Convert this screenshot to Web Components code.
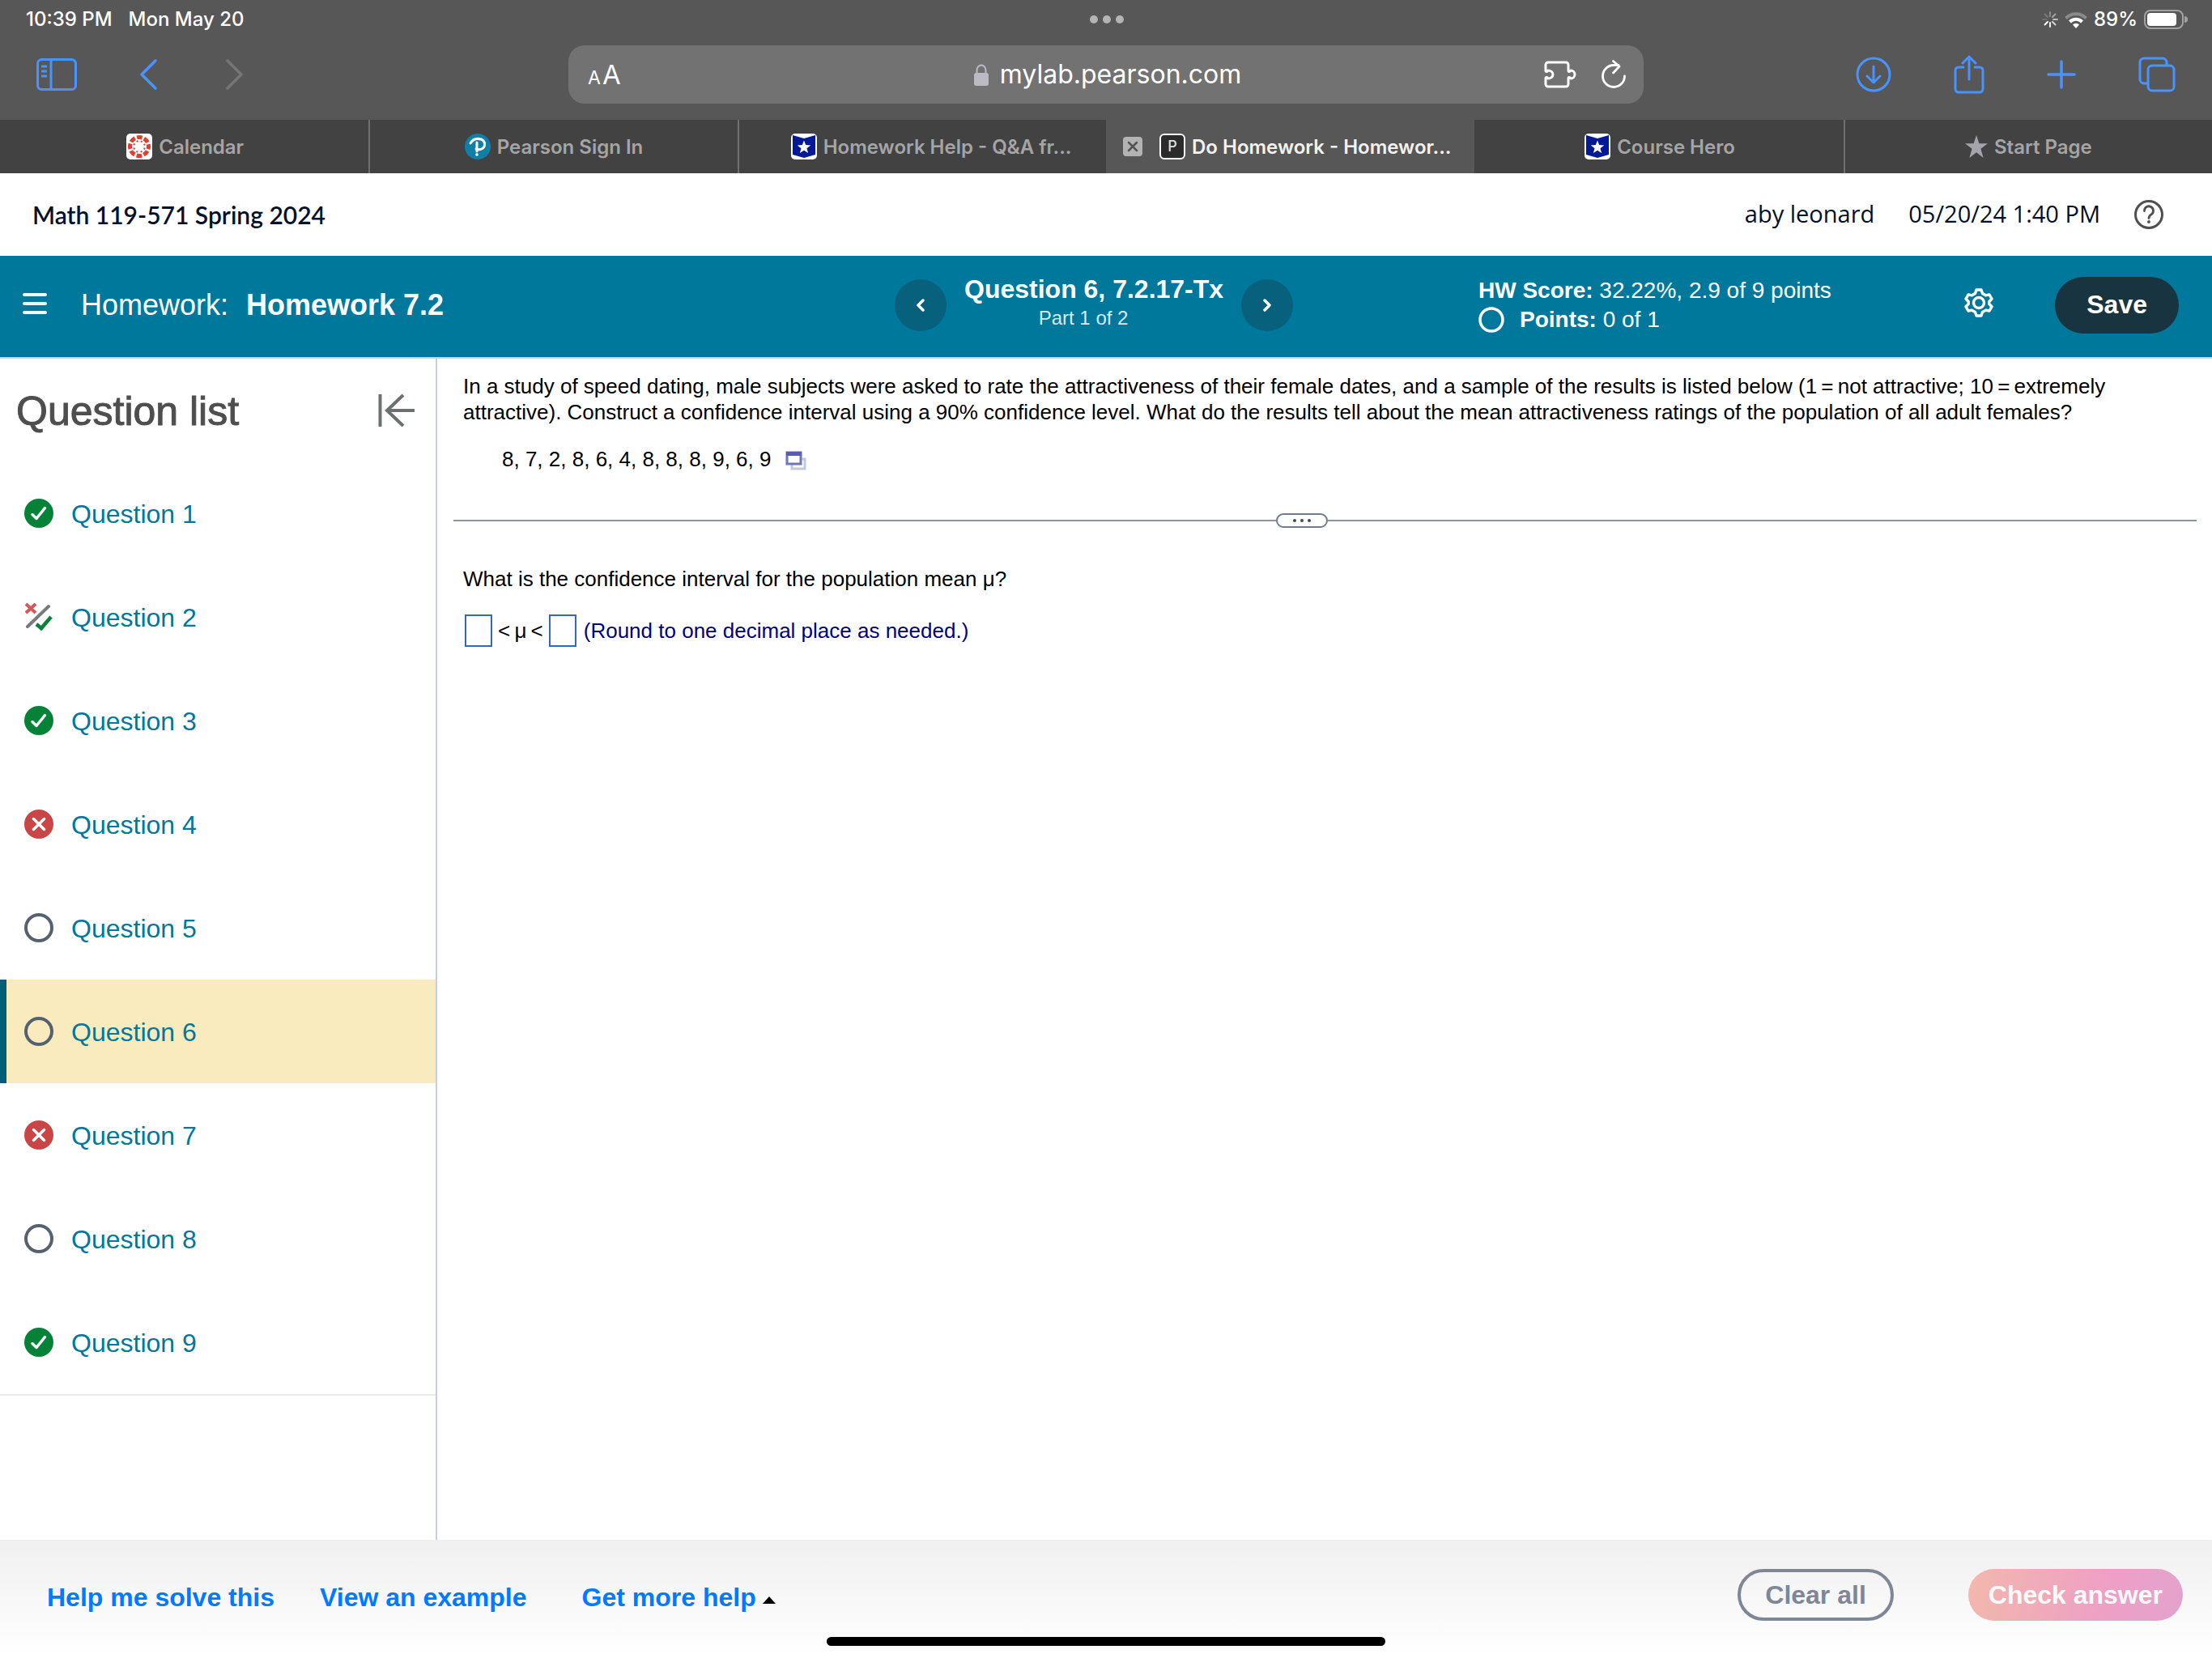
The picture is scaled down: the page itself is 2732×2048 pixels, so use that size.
<!DOCTYPE html>
<html lang="en">
<head>
<meta charset="utf-8">
<title>Do Homework - Homework 7.2</title>
<style>
html, body { margin: 0; padding: 0; }
body { background: #fff; color: #000; font-family: "Liberation Sans", Arial, sans-serif; }
</style>
</head>
<body>
<homework-app></homework-app>
<script>
const define = (name, html, setup) => {
  const template = document.createElement('template');
  template.innerHTML = html;
  customElements.define(name, class extends HTMLElement {
    constructor() {
      super();
      this.attachShadow({ mode: 'open' }).append(template.content.cloneNode(true));
    }
    connectedCallback() { if (setup) setup(this, this.shadowRoot); }
  });
};

const ICONS = {
  sidebar: ['50 40', '<g fill="none" stroke="currentColor" stroke-width="3"><rect x="1.5" y="1.5" width="47" height="37" rx="5"/><path d="M18 2v36M6 10h7M6 16h7M6 22h7"/></g>'],
  back: ['22 38', '<path d="M20 2L3 19l17 17" fill="none" stroke="currentColor" stroke-width="3.500" stroke-linecap="round" stroke-linejoin="round"/>'],
  forward: ['22 38', '<path d="M2 2l17 17L2 36" fill="none" stroke="currentColor" stroke-width="3.500" stroke-linecap="round" stroke-linejoin="round"/>'],
  lock: ['18 27', '<rect y="11" width="18" height="16" rx="3" fill="currentColor"/><path d="M3.500 12V8a5.500 6.500 0 0 1 11 0v4" fill="none" stroke="currentColor" stroke-width="2"/>'],
  puzzle: ['42 34', '<path d="M2 12V5a3 3 0 0 1 3-3h22a3 3 0 0 1 3 3v7c0 2 2 2 3 0a5 5 0 1 1 0 10c-1-2-3-2-3 0v7a3 3 0 0 1-3 3H5a3 3 0 0 1-3-3v-7c0-2 2-2 3 0a6 5 0 1 0 0-10c-1 2-3 2-3 0z" fill="none" stroke="currentColor" stroke-width="3" stroke-linejoin="round"/>'],
  reload: ['30 36', '<path d="M28.500 20A13.500 13.500 0 1 1 15 6.500h6M14.500 1.500L22 8l-7.500 8" fill="none" stroke="currentColor" stroke-width="2.800" stroke-linecap="round" stroke-linejoin="round"/>'],
  download: ['44 44', '<g fill="none" stroke="currentColor" stroke-width="3" stroke-linecap="round" stroke-linejoin="round"><circle cx="22" cy="22" r="20"/><path d="M22 12v19M14 24l8 8 8-8"/></g>'],
  share: ['38 48', '<g fill="none" stroke="currentColor" stroke-width="3" stroke-linecap="round" stroke-linejoin="round"><path d="M12 15H6a4 4 0 0 0-4 4v23a4 4 0 0 0 4 4h26a4 4 0 0 0 4-4V19a4 4 0 0 0-4-4h-6M19 30V2M11 10l8-8 8 8"/></g>'],
  plus: ['36 36', '<path d="M18 2v32M2 18h32" stroke="currentColor" stroke-width="3.500" stroke-linecap="round"/>'],
  windows: ['46 44', '<g fill="none" stroke="currentColor" stroke-width="3"><rect x="12" y="11" width="32" height="31" rx="5"/><path d="M12 33H7a5 5 0 0 1-5-5V7a5 5 0 0 1 5-5h23a5 5 0 0 1 5 5v4"/></g>'],
  spinner: ['20 20', '<g stroke="#fff" stroke-width="2" stroke-linecap="round"><path d="M10 1v5" opacity=".3"/><path d="M16.500 3.500L13 7" opacity=".45"/><path d="M19 10h-5" opacity=".6"/><path d="M16.500 16.500L13 13" opacity=".75"/><path d="M10 19v-5" opacity=".9"/><path d="M3.500 16.500L7 13"/><path d="M1 10h5" opacity=".15"/><path d="M3.500 3.500L7 7" opacity=".2"/></g>'],
  wifi: ['28 21', '<g fill="none" stroke="#fff" stroke-width="4"><path d="M1.500 8.500a17.500 17.500 0 0 1 25 0" stroke="#8a8a8a"/><path d="M6.500 13a10.500 10.500 0 0 1 15 0"/></g><path d="M14 21l-4-4.500a5.600 5.600 0 0 1 8 0z" fill="#fff"/>'],
  battery: ['54 24', '<rect x="1" y="1" width="47" height="22" rx="7" fill="none" stroke="#a2a2a2" stroke-width="2"/><rect x="4" y="4" width="36" height="16" rx="4" fill="#fff"/><path d="M50 8a4 4 0 0 1 0 8z" fill="#a2a2a2"/>'],
  dots: ['42 10', '<g fill="#b4b4b4"><circle cx="5" cy="5" r="5"/><circle cx="21" cy="5" r="5"/><circle cx="37" cy="5" r="5"/></g>'],
  canvas: ['32 32', '<rect width="32" height="32" rx="5" fill="#fff"/><circle cx="16" cy="16" r="11.500" fill="none" stroke="#e63b2e" stroke-width="5" stroke-dasharray="6.600 2.432" stroke-dashoffset="3.300"/><circle cx="16" cy="16" r="6.800" fill="none" stroke="#e63b2e" stroke-width="2" stroke-dasharray="2 3.340" stroke-dashoffset="-1.670"/>'],
  pearson: ['32 32', '<circle cx="16" cy="16" r="16" fill="#0f7fa5"/><path d="M7 12c3-5 8-6.500 13-5 6 2 6.500 11-1 12.500-2 .4-4 0-5-.5M15 11v11" fill="none" stroke="#fff" stroke-width="3" stroke-linecap="round"/><circle cx="15" cy="26" r="1.800" fill="#fff"/>'],
  coursehero: ['32 32', '<rect width="32" height="32" rx="5" fill="#fff"/><path d="M2 2l14 4 14-4v24l-14 4-14-4z" fill="#001a96"/><path d="M16 8.500l2.200 5.600 6 .3-4.700 3.800 1.600 5.800-5.100-3.300-5.100 3.300 1.600-5.800-4.700-3.800 6-.3z" fill="#fff"/>'],
  star: ['28 28', '<path d="M14 0l3.400 10.300H28l-8.600 6.500L22.600 28 14 21.200 5.400 28l3.200-11.200L0 10.300h10.600z" fill="#a5a4ad"/>'],
  close: ['24 24', '<rect width="24" height="24" rx="4" fill="#b3b3b3"/><path d="M7 7l10 10M17 7L7 17" stroke="#555" stroke-width="2.500" stroke-linecap="round"/>'],
  help: ['36 36', '<circle cx="18" cy="18" r="16.500" fill="none" stroke="#4f4f4f" stroke-width="3"/><path d="M12.500 13.500a5.500 5.500 0 1 1 8.500 4.400c-2 1.300-3 2.100-3 4.600" fill="none" stroke="#4f4f4f" stroke-width="2.800" stroke-linecap="round"/><circle cx="18" cy="27" r="1.900" fill="#4f4f4f"/>'],
  menu: ['30 28', '<path d="M2 3h26M2 14h26M2 25h26" stroke="#f2fafc" stroke-width="4" stroke-linecap="round"/>'],
  prev: ['10 16', '<path d="M8 2L2 8l6 6" fill="none" stroke="#fff" stroke-width="3.500" stroke-linecap="round" stroke-linejoin="round"/>'],
  next: ['10 16', '<path d="M2 2l6 6-6 6" fill="none" stroke="#fff" stroke-width="3.500" stroke-linecap="round" stroke-linejoin="round"/>'],
  ring: ['32 32', '<circle cx="16" cy="16" r="14" fill="none" stroke="#fff" stroke-width="3.500"/>'],
  gear: ['36 36', '<path d="M15 2h6l1.500 4.500 4 2.300L31 8l3 5.200-3.200 3.300v3L34 22.800 31 28l-4.500-.8-4 2.300L21 34h-6l-1.500-4.500-4-2.300L5 28l-3-5.200 3.200-3.300v-3L2 13.200 5 8l4.500.8 4-2.300z" fill="none" stroke="#fff" stroke-width="3.400" stroke-linejoin="round"/><circle cx="18" cy="18" r="6.500" fill="none" stroke="#fff" stroke-width="3.400"/>'],
  collapse: ['46 42', '<path d="M2.500 1v40M45 21H10M31 2L11 21l20 19" fill="none" stroke="#6b7070" stroke-width="4"/>'],
  correct: ['36 36', '<circle cx="18" cy="18" r="18" fill="#038238"/><path d="M10 19.500l5 5 10.500-13" fill="none" stroke="#fff" stroke-width="3.500" stroke-linecap="round" stroke-linejoin="round"/>'],
  wrong: ['36 36', '<circle cx="18" cy="18" r="18" fill="#ca4646"/><path d="M11.500 11.500l13 13M24.500 11.500l-13 13" stroke="#fff" stroke-width="3.500" stroke-linecap="round"/>'],
  empty: ['36 36', '<circle cx="18" cy="18" r="16" fill="none" stroke="#566170" stroke-width="4"/>'],
  partial: ['36 36', '<path d="M4 30L30 5" stroke="#777b7e" stroke-width="4" stroke-linecap="round"/><path d="M2 2l12 11M14 2L2 13" stroke="#d05a5a" stroke-width="4"/><path d="M15 27l6 5 12-14" fill="none" stroke="#038238" stroke-width="4.500"/>'],
  popup: ['26 24', '<rect x="8" y="10" width="16" height="12" fill="#fff" stroke="#c3c8e4" stroke-width="3"/><rect x="2" y="2" width="17" height="14" fill="#fff" stroke="#6d78bb" stroke-width="3"/><path d="M1 3.500h19" stroke="#5560ab" stroke-width="5"/>'],
  caret: ['16 9', '<path d="M0 9l8-9 8 9z" fill="#000"/>']
};

customElements.define('ui-icon', class extends HTMLElement {
  constructor() { super(); this.attachShadow({ mode: 'open' }); }
  connectedCallback() {
    const [size, shapes] = ICONS[this.getAttribute('name')];
    const [w, h] = size.split(' ');
    this.shadowRoot.innerHTML = `<style>:host{display:block;flex:none}svg{display:block}</style>
      <svg width="${w}" height="${h}" viewBox="0 0 ${w} ${h}" aria-hidden="true">${shapes}</svg>`;
  }
});

const RESET = `button{font:inherit;color:inherit;background:none;border:0;padding:0;margin:0;display:flex;align-items:center}
  a{color:inherit;text-decoration:none}`;

define('status-bar', `<style>
  :host{display:grid;grid-template-columns:1fr auto 1fr;align-items:center;height:48px;padding:0 30px 0 32px;color:#fff;font:500 24px/28px Inter,sans-serif}
  .time{display:flex;gap:20px}
  .state{display:flex;justify-content:flex-end;align-items:center;gap:8px}
  </style>
  <div class="time"><span>10:39 PM</span><span>Mon May 20</span></div>
  <ui-icon name="dots"></ui-icon>
  <div class="state"><ui-icon name="spinner"></ui-icon><ui-icon name="wifi"></ui-icon><span>89%</span><ui-icon name="battery"></ui-icon></div>`);

define('safari-toolbar', `<style>${RESET}
  :host{display:grid;grid-template-columns:702fr 1328fr 702fr;align-items:center;height:72px;padding:8px 0 20px;color:#4893ff;font-family:Inter,sans-serif}
  .left{display:flex;align-items:center;gap:77px;padding-left:45px}
  .off{color:#757575;margin-left:8px}
  .address{display:grid;grid-template-columns:1fr auto 1fr;align-items:center;height:72px;box-sizing:border-box;padding:0 22px 0 24px;background:#727272;border-radius:20px;color:#fff}
  .size{align-items:baseline;gap:2px;padding-top:4px;font-size:33px;line-height:40px}
  .size small{font-size:23px}
  .url{display:flex;align-items:center;gap:14px;padding-left:2px;font-size:32px;line-height:40px}
  .url ui-icon{color:#bcbbc4}
  .tools{display:flex;justify-content:flex-end;align-items:center;gap:29px}
  .right{display:flex;justify-content:flex-end;align-items:center;gap:77px;padding-right:45px}
  </style>
  <div class="left"><button aria-label="Sidebar"><ui-icon name="sidebar"></ui-icon></button><button aria-label="Back"><ui-icon name="back"></ui-icon></button><button class="off" aria-label="Forward"><ui-icon name="forward"></ui-icon></button></div>
  <div class="address"><button class="size"><small>A</small><span>A</span></button><div class="url"><ui-icon name="lock"></ui-icon><span>mylab.pearson.com</span></div>
  <div class="tools"><button aria-label="Extensions"><ui-icon name="puzzle"></ui-icon></button><button aria-label="Reload"><ui-icon name="reload"></ui-icon></button></div></div>
  <div class="right"><button aria-label="Downloads"><ui-icon name="download"></ui-icon></button><button aria-label="Share"><ui-icon name="share"></ui-icon></button><button aria-label="New tab"><ui-icon name="plus"></ui-icon></button><button aria-label="Tabs"><ui-icon name="windows"></ui-icon></button></div>`);

define('browser-tab', `<style>${RESET}
  :host{display:flex;align-items:center;justify-content:center;gap:8px;background:#424242;color:#a5a5a5;box-sizing:border-box;border-left:2px solid #6f6f6f;white-space:nowrap;overflow:hidden;font:600 24px/32px Inter,sans-serif}
  :host([plain]){border-left-color:#424242}
  :host([long]){justify-content:flex-start;padding-left:64px}
  :host([active]){justify-content:flex-start;padding-left:19px;background:#575757;color:#f2f2f2;border-left-color:#575757}
  .close{display:none;margin-right:13px}
  :host([active]) .close{display:block}
  .label{padding-top:2px}
  .p{display:none;width:32px;height:32px;box-sizing:border-box;border:2px solid #fff;border-radius:6px;background:#2b2b2b;color:#ddd;font-size:18px;line-height:28px;text-align:center;font-weight:500}
  :host([active]) .p{display:block}
  </style>
  <button class="close" aria-label="Close tab"><ui-icon name="close"></ui-icon></button><span class="p">P</span><slot name="icon"></slot><span class="label"><slot></slot></span>`);

define('tab-strip', `<style>
  :host{display:grid;grid-template-columns:repeat(6,1fr);height:66px}
  </style>
  <browser-tab plain><ui-icon slot="icon" name="canvas"></ui-icon>Calendar</browser-tab>
  <browser-tab><ui-icon slot="icon" name="pearson"></ui-icon>Pearson Sign In</browser-tab>
  <browser-tab long><ui-icon slot="icon" name="coursehero"></ui-icon>Homework Help - Q&amp;A fr...</browser-tab>
  <browser-tab active>Do Homework - Homewor...</browser-tab>
  <browser-tab plain><ui-icon slot="icon" name="coursehero"></ui-icon>Course Hero</browser-tab>
  <browser-tab><ui-icon slot="icon" name="star"></ui-icon>Start Page</browser-tab>`);

define('course-header', `<style>${RESET}
  :host{display:flex;align-items:center;height:102px;padding:0 60px 0 40px;background:#fff;color:#05112a}
  .course{flex:1;font:600 30px/40px Lato,sans-serif}
  .who{font:400 29px/40px "Open Sans",sans-serif;margin-right:42px;padding-bottom:2px}
  </style>
  <span class="course">Math 119-571 Spring 2024</span>
  <span class="who">aby leonard</span><span class="who">05/20/24 1:40 PM</span>
  <button aria-label="Help"><ui-icon name="help"></ui-icon></button>`);

define('homework-banner', `<style>${RESET}
  :host{display:grid;grid-template-columns:1105fr 721fr 906fr;align-items:center;height:121px;padding-bottom:4px;background:#00789b;border-bottom:2px solid #c9d0df;color:#fff}
  .title{display:flex;align-items:center;gap:42px;padding-left:28px;font-size:36px;line-height:44px}
  .title b{margin-left:12px}
  .title button{padding-bottom:4px}
  .nav{display:flex;align-items:center;gap:22px}
  .round{width:64px;height:64px;border-radius:50%;background:#07607c;justify-content:center}
  .part{text-align:center;padding-bottom:8px}
  .part b{display:block;font-size:32px;line-height:40px}
  .part span{display:block;padding-right:26px;font-size:24px;line-height:32px;color:#d5ebf4}
  .end{display:flex;align-items:center}
  .score{flex:1;font-size:28px;line-height:36px}
  .points{display:flex;align-items:center;gap:19px}
  .set{padding-bottom:6px}
  .save{height:70px;padding:0 39px;margin:0 41px 0 76px;border-radius:35px;background:#193441;font-size:32px;font-weight:bold}
  </style>
  <div class="title"><button aria-label="Menu"><ui-icon name="menu"></ui-icon></button><span>Homework: <b>Homework 7.2</b></span></div>
  <div class="nav"><button class="round" aria-label="Previous question"><ui-icon name="prev"></ui-icon></button>
  <div class="part"><b>Question 6, 7.2.17-Tx</b><span>Part 1 of 2</span></div>
  <button class="round" aria-label="Next question"><ui-icon name="next"></ui-icon></button></div>
  <div class="end"><div class="score"><div><b>HW Score:</b> 32.22%, 2.9 of 9 points</div><div class="points"><ui-icon name="ring"></ui-icon><span><b>Points:</b> 0 of 1</span></div></div>
  <button class="set" aria-label="Settings"><ui-icon name="gear"></ui-icon></button><button class="save">Save</button></div>`);

define('question-item', `<style>${RESET}
  :host{display:block}
  a{display:flex;align-items:center;gap:22px;height:128px;padding-left:30px;color:#00789b;font-size:32px;line-height:40px}
  span{padding-top:2px}
  :host([current]) a{background:#f9ebbd;border-left:8px solid #005f79;padding-left:22px}
  </style>
  <a href="#"><slot name="icon"></slot><span><slot></slot></span></a>`);

define('question-list', `<style>${RESET}
  :host{display:block;width:538px;border-right:2px solid #c9cde0}
  header{display:flex;align-items:center;justify-content:space-between;height:127px;padding:0 25px 0 20px;box-sizing:border-box}
  h2{margin:0;padding-top:2px;color:#4e4e4e;font-size:50px;line-height:60px;font-weight:400;-webkit-text-stroke:1px #4e4e4e}
  nav{border-bottom:2px solid #ebebeb}
  </style>
  <header><h2>Question list</h2><button aria-label="Collapse question list"><ui-icon name="collapse"></ui-icon></button></header>
  <nav></nav>`, (host, root) => {
  const states = ['correct', 'partial', 'correct', 'wrong', 'empty', 'empty', 'wrong', 'empty', 'correct'];
  root.querySelector('nav').innerHTML = states.map((state, i) =>
    `<question-item${i === 5 ? ' current' : ''}><ui-icon slot="icon" name="${state}"></ui-icon>Question ${i + 1}</question-item>`).join('');
});

define('exercise-pane', `<style>${RESET}
  :host{display:block;flex:1;min-width:0;padding:18px 19px 0 20px;font-size:26px;line-height:32px}
  p{margin:0;padding:0 100px 0 12px}
  .data{display:flex;align-items:center;gap:18px;padding:26px 0 0 60px}
  .data button{padding-top:4px}
  .split{display:flex;align-items:center;padding:51px 0 47px}
  .split::before,.split::after{content:"";height:2px;background:#8a94a5}
  .split::before{flex:1016}
  .split::after{flex:1073}
  .split button{width:64px;height:18px;box-sizing:border-box;border:2px solid #6f7d90;border-radius:9px;justify-content:center;gap:5px;background:#fff}
  .split i{width:4px;height:4px;border-radius:50%;background:#3d4c63}
  .answer{display:flex;align-items:center;gap:7px;padding:28px 0 0 14px}
  input{width:34px;height:40px;box-sizing:border-box;border:2px solid #3366cc;background:#fff;padding:0;margin:0;font:inherit;text-align:center}
  label{margin-left:2px;color:#000080}
  </style>
  <p>In a study of speed dating, male subjects were asked to rate the attractiveness of their female dates, and a sample of the results is listed below (1&#8201;=&#8201;not attractive; 10&#8201;=&#8201;extremely attractive). Construct a confidence interval using a 90% confidence level. What do the results tell about the mean attractiveness ratings of the population of all adult females?</p>
  <div class="data"><span>8, 7, 2, 8, 6, 4, 8, 8, 8, 9, 6, 9</span><button aria-label="Open data"><ui-icon name="popup"></ui-icon></button></div>
  <div class="split"><button aria-label="Resize panes"><i></i><i></i><i></i></button></div>
  <p>What is the confidence interval for the population mean μ?</p>
  <div class="answer"><input id="low" aria-label="Lower limit"><span>&lt;&#8201;μ&#8201;&lt;</span><input id="high" aria-label="Upper limit"><label for="high">(Round to one decimal place as needed.)</label></div>`);

define('action-bar', `<style>${RESET}
  :host{display:flex;align-items:flex-start;height:110px;padding:36px 36px 0 58px;background:linear-gradient(#f0f0f0,#fff);font-size:32px;line-height:40px;font-weight:bold}
  .links{display:flex;flex:1;gap:56px;padding-top:15px;color:#007aff}
  .links button{gap:8px;margin-left:12px}
  .links ui-icon{padding-top:7px}
  .clear,.check{height:64px;border-radius:32px}
  .clear{border:4px solid #7f8797;color:#7f8797;padding:0 30px;margin-right:92px}
  .check{padding:0 25px;color:#fafafa;background:linear-gradient(100deg,#f2b8ac,#ee9fc6 65%,#e3a3cd)}
  </style>
  <div class="links"><a href="#">Help me solve this</a><a href="#">View an example</a><button>Get more help<ui-icon name="caret"></ui-icon></button></div>
  <button class="clear">Clear all</button><button class="check">Check answer</button>`);

define('homework-app', `<style>
  :host{display:flex;flex-direction:column;min-height:100vh;position:relative}
  .chrome{background:#575757}
  main{display:flex;flex:1}
  .home{position:absolute;left:50%;bottom:15px;width:690px;height:11px;margin-left:-345px;border-radius:6px;background:#000}
  </style>
  <div class="chrome"><status-bar></status-bar><safari-toolbar></safari-toolbar><tab-strip></tab-strip></div>
  <course-header></course-header>
  <homework-banner></homework-banner>
  <main><question-list></question-list><exercise-pane></exercise-pane></main>
  <action-bar></action-bar>
  <div class="home"></div>`);
</script>
</body>
</html>
